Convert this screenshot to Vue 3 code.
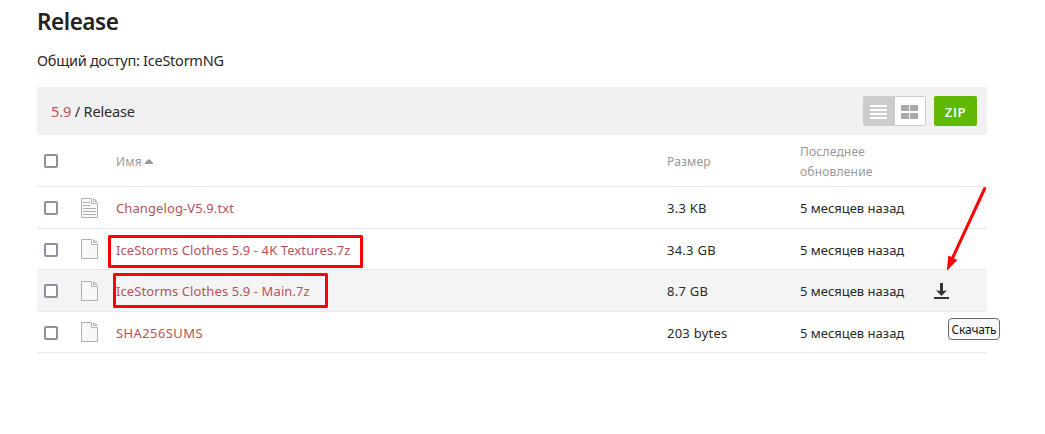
<template>
  <div class="page">
    <h1 class="title">Release</h1>
    <p class="shared">Общий доступ: IceStormNG</p>

    <div class="toolbar">
      <div class="crumbs"><a href="#">5.9</a> / Release</div>
      <div class="view-toggle">
        <button class="view active" @click="view = 'list'">
          <svg width="17" height="14" viewBox="0 0 17 14" shape-rendering="crispEdges">
            <path d="M0 0h17v2H0zM0 4h17v2H0zM0 8h17v2H0zM0 12h17v2H0z" fill="#fff" />
          </svg>
        </button>
        <button class="view" @click="view = 'grid'">
          <svg width="17" height="14" viewBox="0 0 17 14" shape-rendering="crispEdges">
            <path d="M0 0h8v6H0zM9 0h8v6H9zM0 8h8v6H0zM9 8h8v6H9z" fill="#aaa" />
          </svg>
        </button>
      </div>
      <button class="zip">ZIP</button>
    </div>

    <div class="table">
      <div class="row head">
        <span class="check"></span>
        <span></span>
        <span class="label">Имя
          <svg class="sort" width="8" height="5" viewBox="0 0 8 5"><path d="M0 5V4L3 0.500h2L8 4v1z" fill="#999" /></svg>
        </span>
        <span class="label">Размер</span>
        <span class="label">Последнее<br>обновление</span>
      </div>
      <div v-for="file in files" :key="file.name" class="row" :class="{ hover: file.hover, tall: file.tall }">
        <span class="check"></span>
        <svg class="file-icon" width="17" height="20" viewBox="0 0 17 20" fill="none" stroke="#b0b0b0">
          <path d="M.5.5h10v5h6v14H.5z" fill="#f8f8f8" />
          <path d="M12.500.8v2.700h3.700z" />
          <path v-if="file.text" d="M2 4.500h7M2 7.500h7M2 10.500h13M2 13.500h13M2 16.500h13" />
        </svg>
        <a class="name" :class="{ caps: file.caps }" href="#">{{ file.name }}</a>
        <span class="size">{{ file.size }}</span>
        <span class="date">5 месяцев назад</span>
        <svg v-if="file.hover" class="download" width="15" height="16" viewBox="0 0 15 16">
          <path d="M6 0h3v8l4.100-.8L7.500 13 2 7.200l4 .8zM0 14h15v2H0z" fill="#333" />
        </svg>
      </div>
    </div>

    <div class="tooltip">Скачать</div>

    <svg class="marks" width="1045" height="434" viewBox="0 0 1045 434">
      <g fill="none" stroke="#f00" stroke-width="3" stroke-linejoin="round">
        <rect x="109.500" y="236.500" width="252" height="30" />
        <rect x="114.500" y="274.500" width="212" height="32" />
        <path d="M984.700 188.500L953 257" stroke-linecap="round" />
      </g>
      <path d="M946.800 270.800L948.300 255.500 957.300 260z" fill="#f00" />
    </svg>
  </div>
</template>

<script setup>
import { ref } from 'vue'

const view = ref('list')

const files = [
  { name: 'Changelog-V5.9.txt', size: '3.3 KB', text: true, tall: true },
  { name: 'IceStorms Clothes 5.9 - 4K Textures.7z', size: '34.3 GB' },
  { name: 'IceStorms Clothes 5.9 - Main.7z', size: '8.7 GB', hover: true, tall: true },
  { name: 'SHA256SUMS', size: '203 bytes', caps: true }
]
</script>

<style>
body {
  margin: 0;
  background: #fff;
}
</style>

<style scoped>
.page {
  position: relative;
  box-sizing: border-box;
  width: 1045px;
  height: 434px;
  padding: 6px 58px 0 37px;
  overflow: hidden;
  color: #2a2a2a;
  font-family: "Noto Sans", "Open Sans", sans-serif;
}

.title {
  margin: 0;
  color: #222;
  font-size: 22.5px;
  font-weight: 600;
  line-height: 32px;
  letter-spacing: -0.45px;
}

.shared {
  margin: 12px 0 17px;
  font-size: 14.5px;
  line-height: 20px;
  letter-spacing: -0.25px;
}

a {
  color: #b9525a;
  text-decoration: none;
}

.toolbar {
  display: flex;
  align-items: center;
  box-sizing: border-box;
  height: 48px;
  padding: 0 10px 0 14px;
  border-radius: 2px;
  background: #f1f1f1;
}

.crumbs {
  flex: 1;
  font-size: 14.5px;
  line-height: 20px;
  letter-spacing: -0.15px;
}

.view-toggle {
  display: flex;
  box-sizing: border-box;
  width: 63px;
  height: 30px;
  margin-right: 8px;
  border: 1px solid #ccc;
  border-radius: 2px;
  background: #fff;
}

.view {
  display: flex;
  align-items: center;
  justify-content: center;
  box-sizing: border-box;
  width: 30px;
  padding: 2px 1px 0 0;
  border: 0;
  background: #fff;
}

.view.active {
  width: 31px;
  padding-right: 2px;
  background: #ccc;
}

.zip {
  width: 43px;
  height: 30px;
  padding: 2px 0 0;
  border: 0;
  border-radius: 2px;
  background: #60b900;
  color: #fff;
  font: 600 13px "Open Sans", sans-serif;
  letter-spacing: 0.7px;
}

.row {
  display: grid;
  grid-template-columns: 37px 35px 551px 133px 134px 1fr;
  align-items: center;
  box-sizing: border-box;
  height: 41px;
  padding-left: 7px;
  border-bottom: 1px solid #e9e9e9;
  font-size: 13px;
  line-height: 20px;
}

.row.tall {
  height: 42px;
}

.row.head {
  height: 52px;
  color: #999;
  font-size: 12px;
}

.row.hover {
  background: #f4f4f4;
}

.check {
  box-sizing: border-box;
  width: 14px;
  height: 14px;
  border: 2px solid #8f8f9d;
  border-radius: 2px;
  background: #fff;
}

.row:not(.tall):not(.head) .check,
.row:not(.tall) .name,
.row:not(.tall) .size,
.row:not(.tall) .date {
  margin-top: 2px;
}

.tall .file-icon {
  margin-top: 1px;
}

.label {
  padding-top: 2px;
  letter-spacing: 0.2px;
}

.name {
  letter-spacing: 0.1px;
}

.name.caps {
  letter-spacing: 0.4px;
}

.size {
  letter-spacing: 0.25px;
}

.sort {
  vertical-align: 2px;
}

.tooltip {
  position: absolute;
  left: 948px;
  top: 318px;
  box-sizing: border-box;
  width: 52px;
  height: 22px;
  border: 1px solid #67676c;
  border-radius: 4px;
  background: #f9f9fb;
  color: #15141a;
  font-size: 12px;
  line-height: 22px;
  letter-spacing: -0.2px;
  text-align: center;
}

.marks {
  position: absolute;
  left: 0;
  top: 0;
  pointer-events: none;
}
</style>
